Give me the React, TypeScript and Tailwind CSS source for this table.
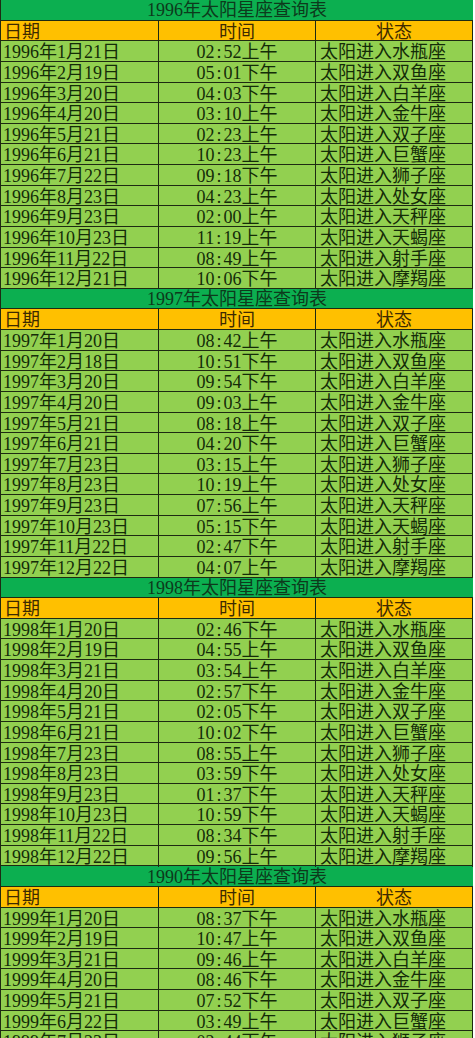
type Row = [string, string, string];

const SIGNS = ["水瓶座", "双鱼座", "白羊座", "金牛座", "双子座", "巨蟹座", "狮子座", "处女座", "天秤座", "天蝎座", "射手座", "摩羯座"];

const sections: { title: string; year: string; rows: [string, string][] }[] = [
  {
    title: "1996",
    year: "1996",
    rows: [
      ["1月21日", "02:52上午"], ["2月19日", "05:01下午"], ["3月20日", "04:03下午"], ["4月20日", "03:10上午"],
      ["5月21日", "02:23上午"], ["6月21日", "10:23上午"], ["7月22日", "09:18下午"], ["8月23日", "04:23上午"],
      ["9月23日", "02:00上午"], ["10月23日", "11:19上午"], ["11月22日", "08:49上午"], ["12月21日", "10:06下午"],
    ],
  },
  {
    title: "1997",
    year: "1997",
    rows: [
      ["1月20日", "08:42上午"], ["2月18日", "10:51下午"], ["3月20日", "09:54下午"], ["4月20日", "09:03上午"],
      ["5月21日", "08:18上午"], ["6月21日", "04:20下午"], ["7月23日", "03:15上午"], ["8月23日", "10:19上午"],
      ["9月23日", "07:56上午"], ["10月23日", "05:15下午"], ["11月22日", "02:47下午"], ["12月22日", "04:07上午"],
    ],
  },
  {
    title: "1998",
    year: "1998",
    rows: [
      ["1月20日", "02:46下午"], ["2月19日", "04:55上午"], ["3月21日", "03:54上午"], ["4月20日", "02:57下午"],
      ["5月21日", "02:05下午"], ["6月21日", "10:02下午"], ["7月23日", "08:55上午"], ["8月23日", "03:59下午"],
      ["9月23日", "01:37下午"], ["10月23日", "10:59下午"], ["11月22日", "08:34下午"], ["12月22日", "09:56上午"],
    ],
  },
  {
    // the source sheet really says 1990 here
    title: "1990",
    year: "1999",
    rows: [
      ["1月20日", "08:37下午"], ["2月19日", "10:47上午"], ["3月21日", "09:46上午"], ["4月20日", "08:46下午"],
      ["5月21日", "07:52下午"], ["6月22日", "03:49上午"], ["7月23日", "02:44下午"], ["8月23日", "09:51下午"],
    ],
  },
];

const cell = "h-full flex items-center pt-[2px] border-r border-[#1e2a12] whitespace-nowrap";
const rowCls = "grid grid-cols-[158px_157px_157px] h-[20.64px] border-b border-[#1e2a12] text-[18px] leading-[19px]";
const serif = { fontFamily: '"Liberation Serif", "Noto Sans CJK SC", serif' };

// colon gets a full half-width cell like the sheet's fixed-width font
function Txt({ s }: { s: string }) {
  const parts = s.split(":");
  return (
    <span>
      {parts.map((p, i) => (
        <span key={i}>
          {i > 0 && <span className="inline-block w-[9px] text-center">:</span>}
          {p}
        </span>
      ))}
    </span>
  );
}

function Section({ title, year, rows }: { title: string; year: string; rows: [string, string][] }) {
  const data: Row[] = rows.map(([d, t], i) => [year + "年" + d, t, "太阳进入" + SIGNS[i]]);
  return (
    <div style={serif}>
      <div className="h-[20.64px] pt-[2px] bg-[#0caf50] border-b border-[#1e2a12] flex items-center justify-center text-[18px] leading-[19px] text-[#0d3a1c]">
        {title}年太阳星座查询表
      </div>
      <div className={rowCls + " bg-[#ffc000] text-[#3d2a00]"}>
        <div className={cell + " pl-[3px]"}>日期</div>
        <div className={cell + " justify-center"}>时间</div>
        <div className={cell + " justify-center"}>状态</div>
      </div>
      {data.map((r) => (
        <div key={r[0]} className={rowCls + " bg-[#92d050] text-[#142c08]"}>
          <div className={cell + " pl-[2px]"}><Txt s={r[0]} /></div>
          <div className={cell + " justify-center"}><Txt s={r[1]} /></div>
          <div className={cell + " pl-[4px]"}>{r[2]}</div>
        </div>
      ))}
    </div>
  );
}

export default function App() {
  return (
    <div className="h-[1038px] w-[475px] overflow-hidden bg-white">
      <div className="w-[473px] border-l border-[#1e2a12]">
        {sections.map((s) => (
          <Section key={s.title} {...s} />
        ))}
      </div>
    </div>
  );
}
